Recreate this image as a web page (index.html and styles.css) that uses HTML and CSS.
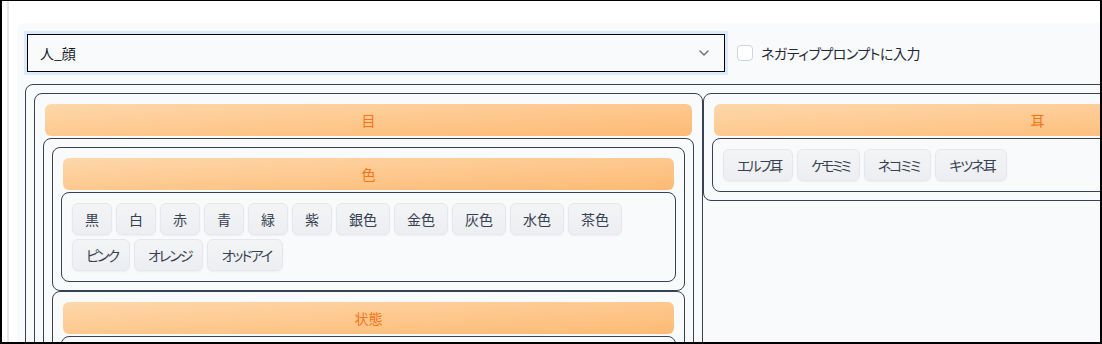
FILE: index.html
```html
<!DOCTYPE html>
<html lang="ja">
<head>
<meta charset="UTF-8">
<meta name="viewport" content="width=device-width, initial-scale=1.0">
<link rel="stylesheet" href="styles.css">
<title>プロンプト</title>
</head>
<body>
<div id="frame">
  <div class="rail"></div>
  <div class="main">
    <div class="panel">
      <div class="toolbar">
        <div class="select">
          <span>人_顔</span>
          <svg class="chevron" width="10" height="6" viewBox="0 0 10 6"><path d="M1 1l4 4 4-4" fill="none" stroke="#6b7280" stroke-width="1.5" stroke-linecap="round" stroke-linejoin="round"/></svg>
        </div>
        <label class="check"><span class="box"></span>ネガティブプロンプトに入力</label>
      </div>

      <div class="children root">
        <div class="group">
          <div class="header">目</div>
          <div class="children">
            <div class="group">
              <div class="header">色</div>
              <div class="tags">
                <div class="tag">黒</div>
                <div class="tag">白</div>
                <div class="tag">赤</div>
                <div class="tag">青</div>
                <div class="tag">緑</div>
                <div class="tag">紫</div>
                <div class="tag">銀色</div>
                <div class="tag">金色</div>
                <div class="tag">灰色</div>
                <div class="tag">水色</div>
                <div class="tag">茶色</div>
                <div class="tag kana">ピンク</div>
                <div class="tag kana">オレンジ</div>
                <div class="tag kana">オッドアイ</div>
              </div>
            </div>
            <div class="group">
              <div class="header">状態</div>
              <div class="tags"></div>
            </div>
          </div>
        </div>
        <div class="group">
          <div class="header">耳</div>
          <div class="tags">
            <div class="tag kana">エルフ耳</div>
            <div class="tag kana tight">ケモミミ</div>
            <div class="tag kana">ネコミミ</div>
            <div class="tag kana">キツネ耳</div>
          </div>
        </div>
      </div>
    </div>
  </div>
</div>
</body>
</html>
```

FILE: styles.css
```css
body {
  margin: 0;
  font-family: "Noto Sans CJK JP", "Noto Sans", sans-serif;
  font-size: 14px;
  font-feature-settings: "palt";
  color: #1f2937;
}
#frame {
  width: 1102px;
  height: 344px;
  box-sizing: border-box;
  border: solid #000;
  border-width: 1px 2px 2px 2px;
  background-color: white;
  overflow: hidden;
  display: flex;
}
.rail {
  flex: none;
  width: 2px;
  margin-left: 5px;
  background-color: #e5e7eb;
}
.main {
  flex: none;
  padding: 22px 0 0 8px;
}
.panel {
  width: 1400px;
  min-height: 400px;
  padding: 8px;
  background-color: #f9fafb;
  border-radius: 8px 0 0 0;
}
.toolbar {
  display: flex;
  align-items: center;
  padding: 3px 3px 3px 2px;
  margin-bottom: 9px;
}
.select {
  width: 698px;
  height: 38px;
  box-sizing: border-box;
  border: 1px solid #000;
  box-shadow: 0 0 0 3px #dbeafe;
  background-color: #f9fafb;
  display: flex;
  align-items: center;
  justify-content: space-between;
  padding: 0 15px 0 12px;
  color: #111827;
}
.check {
  display: flex;
  align-items: center;
  margin-left: 12px;
  color: #1f2937;
  letter-spacing: -0.5px;
}
.box {
  width: 16px;
  height: 16px;
  box-sizing: border-box;
  border: 1px solid #d1d5db;
  border-radius: 4px;
  background-color: white;
  margin-right: 8px;
}
.children {
  border: 1px solid #374151;
  border-radius: 8px;
  padding: 8px;
  display: flex;
  flex-direction: column;
}
.root {
  display: grid;
  grid-template-columns: repeat(2, 669px);
  align-items: start;
  width: max-content;
}
.group {
  border: 1px solid #374151;
  border-radius: 8px;
  padding: 8px;
  display: flex;
  flex-direction: column;
}
.header {
  height: 32px;
  margin: 2px;
  border-radius: 6px;
  background: linear-gradient(to bottom right, #fed7aa, #fdba74);
  color: #f97316;
  display: flex;
  align-items: center;
  justify-content: center;
}
.tags {
  border: 1px solid #374151;
  border-radius: 8px;
  padding: 10px;
  min-height: 32px;
  display: flex;
  flex-wrap: wrap;
  gap: 4px;
}
.tag {
  height: 32px;
  box-sizing: border-box;
  padding: 0 12px;
  line-height: 30px;
  border: 1px solid #e5e7eb;
  border-radius: 6px;
  background: linear-gradient(#f3f4f6, #eceef1);
  box-shadow: 0 1px 2px rgba(0, 0, 0, 0.05);
  color: #374151;
  user-select: none;
}
.kana {
  letter-spacing: -2px;
  padding: 0 11px 0 13px;
}
.tight {
  letter-spacing: -3px;
  padding: 0 10px 0 13px;
}
```
